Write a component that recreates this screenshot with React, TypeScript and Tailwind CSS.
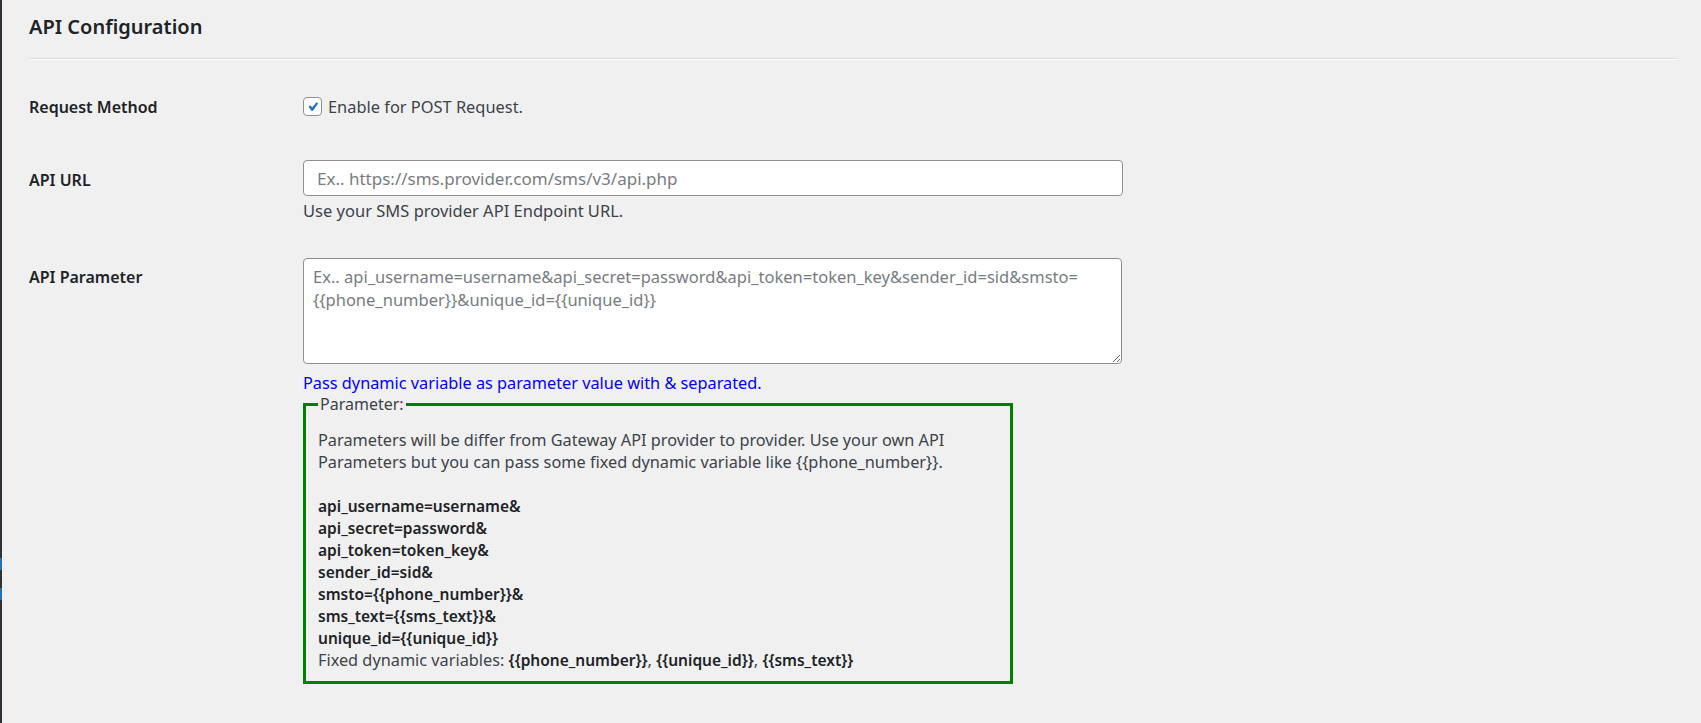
import React from "react";

export default function App() {
  const font = { fontFamily: '"Noto Sans", "Open Sans", sans-serif' };
  return (
    <div className="flex min-h-screen w-full bg-[#f0f0f1]" style={font}>
      <div className="flex w-[2px] shrink-0 flex-col bg-[#2c3338]">
        <div className="h-[558px]" />
        <div className="h-[12px] bg-[#2271b1]" />
        <div className="h-[18px]" />
        <div className="h-[12px] bg-[#2271b1]" />
      </div>
      <div className="flex-1 pl-[27px] pr-[24px]">
        <h2 className="mt-[13px] text-[20px] font-semibold leading-[28px] text-[#1d2327]">
          API Configuration
        </h2>
        <div className="mt-[17px] h-[2px] border-t border-[#dcdcde] bg-white" />

        {/* Row 1 */}
        <div className="mt-[32px] flex h-[30px] items-center">
          <div className="w-[274px] shrink-0 text-[16px] font-semibold text-[#1d2327]">
            Request Method
          </div>
          <label className="flex items-center gap-[6px] text-[16.4px] text-[#3c434a]">
            <span className="flex h-[19px] w-[19px] items-center justify-center rounded-[4px] border border-[#8c8f94] bg-white">
              <svg width="18" height="18" viewBox="0 0 20 20">
                <path
                  d="M14.83 4.89l1.34.94-5.81 8.38H9.02L5.78 9.67l1.34-1.25 2.57 2.4z"
                  fill="#2271b1"
                  stroke="#2271b1"
                  strokeWidth="0.9"
                />
              </svg>
            </span>
            Enable for POST Request.
          </label>
        </div>

        {/* Row 2 */}
        <div className="mt-[38px] flex">
          <div className="w-[274px] shrink-0 pt-[8px] text-[16px] font-semibold leading-[24px] text-[#1d2327]">
            API URL
          </div>
          <div className="flex w-[820px] flex-col">
            <input
              type="text"
              placeholder="Ex.. https://sms.provider.com/sms/v3/api.php"
              className="h-[36px] w-full rounded-[4px] border border-[#8c8f94] bg-white px-[13px] text-[17px] text-[#2c3338] outline-none placeholder:text-[#787c82]"
            />
            <p className="mt-[4px] text-[16.5px] leading-[22px] text-[#3c434a]">
              Use your SMS provider API Endpoint URL.
            </p>
          </div>
        </div>

        {/* Row 3 */}
        <div className="mt-[36px] flex">
          <div className="w-[274px] shrink-0 pt-[7px] text-[16px] font-semibold leading-[24px] text-[#1d2327]">
            API Parameter
          </div>
          <div className="flex flex-col">
            <textarea
              placeholder={
                "Ex.. api_username=username&api_secret=password&api_token=token_key&sender_id=sid&smsto=\n{{phone_number}}&unique_id={{unique_id}}"
              }
              className="block h-[106px] w-[819px] rounded-[4px] border border-[#8c8f94] bg-white px-[9px] pt-[6px] text-[16.5px] leading-[23px] text-[#2c3338] outline-none placeholder:text-[#787c82]"
            />
            <p className="mt-[8px] text-[16.3px] leading-[22px] text-[#0000ff]">
              Pass dynamic variable as parameter value with &amp; separated.
            </p>
            <fieldset className="mt-0 w-[710px] border-[3px] border-[#008000] pb-[10px] pl-[12px] pr-[12px]">
              <legend className="px-[2px] text-[16px] leading-[20px] text-[#3c434a]">
                Parameter:
              </legend>
              <div className="pt-[15px] text-[16.3px] leading-[22px] text-[#3c434a]">
                <p>
                  Parameters will be differ from Gateway API provider to provider. Use your own API
                  <br />
                  Parameters but you can pass some fixed dynamic variable like {"{{phone_number}}"}.
                </p>
                <div className="mt-[22px] text-[15.5px] font-semibold text-[#1d2327]">
                  <div>api_username=username&amp;</div>
                  <div>api_secret=password&amp;</div>
                  <div>api_token=token_key&amp;</div>
                  <div>sender_id=sid&amp;</div>
                  <div>smsto={"{{phone_number}}"}&amp;</div>
                  <div>sms_text={"{{sms_text}}"}&amp;</div>
                  <div>unique_id={"{{unique_id}}"}</div>
                </div>
                <div>
                  Fixed dynamic variables:{" "}
                  <span className="text-[15.5px] font-semibold text-[#1d2327]">{"{{phone_number}}"}</span>,{" "}
                  <span className="text-[15.5px] font-semibold text-[#1d2327]">{"{{unique_id}}"}</span>,{" "}
                  <span className="text-[15.5px] font-semibold text-[#1d2327]">{"{{sms_text}}"}</span>
                </div>
              </div>
            </fieldset>
          </div>
        </div>
      </div>
    </div>
  );
}
